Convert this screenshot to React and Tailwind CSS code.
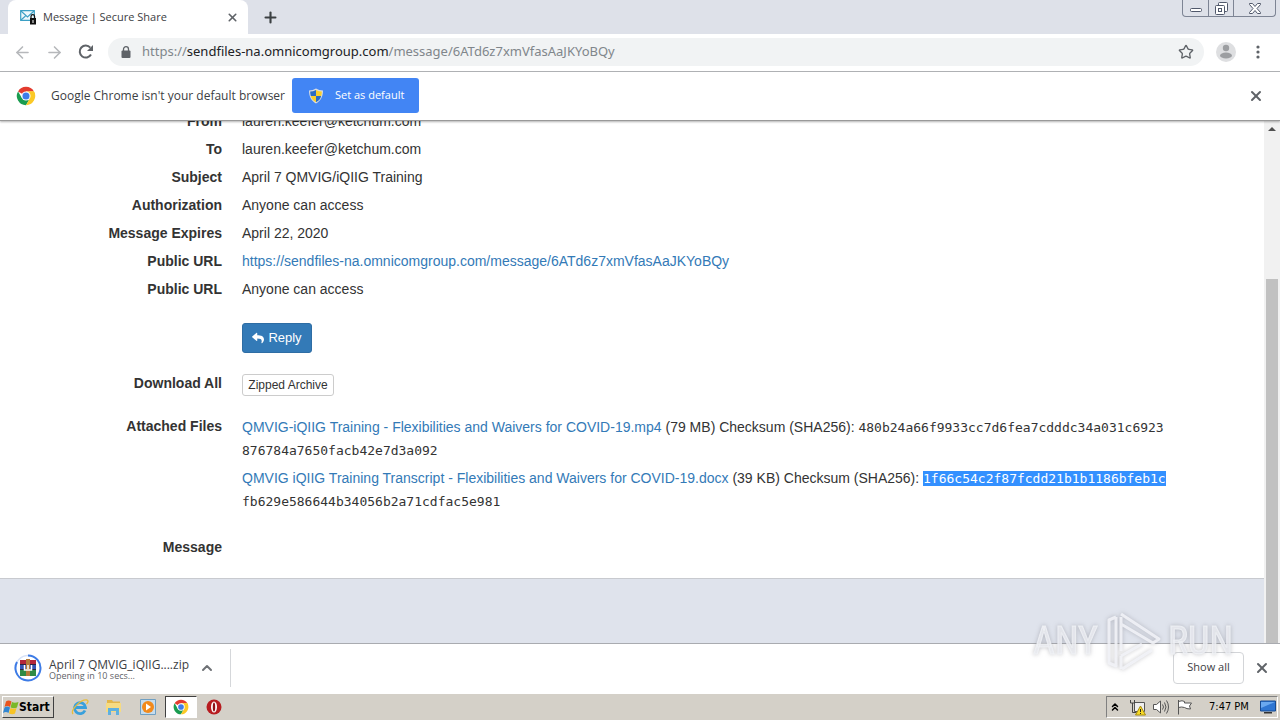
import { FaReply } from "react-icons/fa";
import { ArrowLeft, ArrowRight, ChevronUp, ChevronsUp, Plus, Star, X } from "lucide-react";

const messageUrl = "https://sendfiles-na.omnicomgroup.com/message/6ATd6z7xmVfasAaJKYoBQy";

const details = [
  { label: "From", value: "lauren.keefer@ketchum.com" },
  { label: "To", value: "lauren.keefer@ketchum.com" },
  { label: "Subject", value: "April 7 QMVIG/iQIIG Training" },
  { label: "Authorization", value: "Anyone can access" },
  { label: "Message Expires", value: "April 22, 2020" },
  { label: "Public URL", value: messageUrl, link: true },
  { label: "Public URL", value: "Anyone can access" },
];

const files = [
  {
    name: "QMVIG-iQIIG Training - Flexibilities and Waivers for COVID-19.mp4",
    size: "79 MB",
    hash: ["480b24a66f9933cc7d6fea7cdddc34a031c6923", "876784a7650facb42e7d3a092"],
  },
  {
    name: "QMVIG iQIIG Training Transcript - Flexibilities and Waivers for COVID-19.docx",
    size: "39 KB",
    hash: ["1f66c54c2f87fcdd21b1b1186bfeb1c", "fb629e586644b34056b2a71cdfac5e981"],
    selected: true,
  },
];

function ChromeLogo({ className }) {
  return (
    <svg className={className} viewBox="0 0 48 48" aria-hidden="true">
      <circle cx="24" cy="24" r="22" fill="#fff" />
      <path d="M24 24 4.900 13A22 22 0 0 1 43.100 13H24Z" fill="#e33b2e" />
      <path d="M4.900 13A22 22 0 0 0 24 46L33.500 29.500 24 24 14.500 29.500Z" fill="#1a9c50" />
      <path d="M43.100 13A22 22 0 0 1 24 46L33.500 29.500V13Z" fill="#fbc926" />
      <path d="M24 13H43.100A22 22 0 0 1 45.500 19H24Z" fill="#fbc926" />
      <circle cx="24" cy="24" r="11" fill="#fff" />
      <circle cx="24" cy="24" r="8.500" fill="#3e7de8" />
    </svg>
  );
}

function MailLockIcon() {
  return (
    <svg className="h-4 w-4 shrink-0" viewBox="0 0 16 16" fill="none" aria-hidden="true">
      <path d="M.7 1.700h13.600v9.600H.7Z" fill="#eef8fc" stroke="#3b9fc4" strokeWidth="1.200" />
      <path d="m1 2 6.500 6L14 2M1 11l4.500-4" stroke="#3b9fc4" strokeWidth="1.100" />
      <path d="M11 9V7.500a1.800 1.800 0 0 1 3.600 0V9" stroke="#111" strokeWidth="1.200" />
      <path d="M10 9h6v6.500h-6Z" fill="#111" />
      <path d="M12.500 11h1v3h-1Z" fill="#fff" />
    </svg>
  );
}

function ShieldIcon() {
  return (
    <svg className="h-4 w-4" viewBox="0 0 16 16" aria-hidden="true">
      <path d="M8 .5Q11 2.500 15 2.500C15 9 12.500 13 8 15.500 3.500 13 1 9 1 2.500Q5 2.500 8 .5Z" fill="#d9dde2" />
      <path d="M8 2v6H2.800C2.300 6.500 2.200 5 2.200 3.500Q5 3.500 8 2Z" fill="#2b6cc4" />
      <path d="M8 2v6h5.200c.5-1.500.6-3 .6-4.500Q11 3.500 8 2Z" fill="#f9cf2c" />
      <path d="M8 8v6.300C5.300 12.800 3.500 10.800 2.800 8Z" fill="#f9cf2c" />
      <path d="M8 8v6.300c2.700-1.500 4.500-3.500 5.200-6.300Z" fill="#2b6cc4" />
    </svg>
  );
}

function WindowButtons() {
  return (
    <div className="mr-1 flex h-[17px] rounded-b border border-t-0 border-[#7d8494]">
      <button className="flex w-[25px] items-end justify-center pb-1" type="button" aria-label="Minimize">
        <svg className="h-1 w-3" viewBox="0 0 12 4" aria-hidden="true">
          <rect x=".5" y=".5" width="11" height="3" rx="1" fill="#fff" stroke="#50586b" />
        </svg>
      </button>
      <button className="flex w-[26px] items-center justify-center border-x border-[#7d8494]" type="button" aria-label="Restore">
        <svg className="h-[13px] w-[13px]" viewBox="0 0 13 13" fill="#fff" stroke="#50586b" aria-hidden="true">
          <rect x="3.500" y=".5" width="9" height="9" rx="1" />
          <rect x=".5" y="3.500" width="9" height="9" rx="1" />
          <rect x="3.500" y="6.500" width="3" height="3" />
        </svg>
      </button>
      <button className="flex w-[41px] items-center justify-center" type="button" aria-label="Close window">
        <svg className="h-[11px] w-3" viewBox="0 0 12 11" aria-hidden="true">
          <path d="M.5.500h3L6 3.500 8.500.500h3v1L8 5.500l3.500 4v1h-3L6 7.500l-2.500 3h-3v-1l3.500-4-3.500-4Z" fill="#fff" stroke="#50586b" />
        </svg>
      </button>
    </div>
  );
}

function TabStrip() {
  return (
    <div className="flex h-[34px] shrink-0 items-start bg-[#dee1e9] pl-2">
      <div className="flex h-[34px] w-60 items-center rounded-t-lg bg-white pr-2 pl-3">
        <MailLockIcon />
        <span className="ml-[7px] flex-1 text-[11px] text-[#3c4043]">Message | Secure Share</span>
        <button className="grid h-4 w-4 place-items-center text-[#5f6368]" type="button" aria-label="Close tab">
          <X size={13} strokeWidth={3} />
        </button>
      </div>
      <button className="ml-3 grid h-[34px] w-5 place-items-center text-[#3c4043]" type="button" aria-label="New tab">
        <Plus size={17} strokeWidth={3} />
      </button>
      <div className="flex-1" />
      <WindowButtons />
    </div>
  );
}

function Toolbar() {
  return (
    <div className="flex h-[38px] shrink-0 items-center border-b border-[#b3b5b8] bg-white px-3 pb-px">
      <button className="grid w-5 place-items-center text-[#b6b8bb]" type="button" aria-label="Back">
        <ArrowLeft size={19} />
      </button>
      <button className="ml-3 grid w-5 place-items-center text-[#b6b8bb]" type="button" aria-label="Forward">
        <ArrowRight size={19} />
      </button>
      <button className="ml-3 grid w-5 place-items-center text-[#5f6368]" type="button" aria-label="Reload">
        <svg className="h-4 w-4" viewBox="0 0 16 16" aria-hidden="true">
          <path d="M13 10.500A6 6 0 1 1 12.300 3.700" fill="none" stroke="currentColor" strokeWidth="2" />
          <path d="M15 1v6H9Z" fill="currentColor" />
        </svg>
      </button>
      <div className="ml-3 flex h-7 flex-1 items-center rounded-full bg-[#f1f3f4] pr-[10px] pl-[13px]">
        <svg className="h-3 w-[10px]" viewBox="0 0 10 12" aria-hidden="true">
          <path d="M2.500 5V3.200a2.500 2.500 0 0 1 5 0V5" fill="none" stroke="#5f6368" strokeWidth="1.300" />
          <rect x=".5" y="4.500" width="9" height="7.500" rx="1" fill="#5f6368" />
        </svg>
        <div className="ml-[11px] flex-1 font-['Noto_Sans',sans-serif] text-[13px] text-[#80868b]">
          https://<span className="text-[#202124]">sendfiles-na.omnicomgroup.com</span>/message/6ATd6z7xmVfasAaJKYoBQy
        </div>
        <button className="text-[#5f6368]" type="button" aria-label="Bookmark this page">
          <Star size={16} strokeWidth={2} />
        </button>
      </div>
      <button className="ml-3" type="button" aria-label="Profile">
        <svg className="h-5 w-5" viewBox="0 0 20 20" aria-hidden="true">
          <circle cx="10" cy="10" r="10" fill="#dedfe1" />
          <circle cx="10" cy="6" r="3.200" fill="#9c9ea1" />
          <ellipse cx="10" cy="13.500" rx="6" ry="3" fill="#9c9ea1" />
        </svg>
      </button>
      <button className="ml-3 grid w-5 place-items-center" type="button" aria-label="Menu">
        <svg className="h-4 w-1" viewBox="0 0 4 16" fill="#5f6368" aria-hidden="true">
          <circle cx="2" cy="3" r="1.600" />
          <circle cx="2" cy="8" r="1.600" />
          <circle cx="2" cy="13" r="1.600" />
        </svg>
      </button>
    </div>
  );
}

function DefaultBrowserBar() {
  return (
    <div className="z-10 flex h-[49px] shrink-0 items-center border-b border-[#999] bg-white px-4 pb-px shadow-[0_1px_2px_rgba(0,0,0,0.3)]">
      <ChromeLogo className="h-5 w-5" />
      <span className="ml-[15px] text-xs text-[#3c4043]">Google Chrome isn't your default browser</span>
      <button className="ml-[7px] flex h-[35px] w-[127px] items-center rounded-[3px] bg-[#4285f4] pl-4 text-[11px] text-white" type="button">
        <ShieldIcon />
        <span className="ml-[11px]">Set as default</span>
      </button>
      <div className="flex-1" />
      <button className="text-[#5f6368]" type="button" aria-label="Dismiss">
        <X size={16} strokeWidth={3} />
      </button>
    </div>
  );
}

function MessagePage() {
  return (
    <main className="flex min-w-0 flex-1 flex-col overflow-hidden bg-[#dfe3ec] font-['Liberation_Sans',Arial,sans-serif] text-sm text-[#333]">
      <div className="shrink-0 border-b border-[#c8cacf] bg-white pb-[19px]">
        <dl className="-mt-[14px] grid grid-cols-[222px_1fr] gap-x-5 pr-[90px]">
          {details.map((item, index) => (
            <div className="col-span-2 grid h-7 grid-cols-subgrid items-center" key={index}>
              <dt className="text-right font-bold">{item.label}</dt>
              <dd>
                {item.link ? <a className="text-[#337ab7]" href={item.value}>{item.value}</a> : item.value}
              </dd>
            </div>
          ))}
          <dd className="col-start-2 mt-5">
            <button className="flex h-[30px] w-[70px] items-center justify-center gap-1 rounded-[3px] border border-[#2e6da4] bg-[#337ab7] text-[13px] text-white" type="button">
              <FaReply size={12} /> Reply
            </button>
          </dd>
          <dt className="mt-[19px] text-right leading-[23px] font-bold">Download All</dt>
          <dd className="mt-[21px]">
            <button className="block h-[22px] w-[92px] rounded-[3px] border border-[#ccc] bg-white text-xs" type="button">
              Zipped Archive
            </button>
          </dd>
          <dt className="mt-[19px] text-right leading-[23px] font-bold">Attached Files</dt>
          <dd className="mt-5">
            <ul className="grid gap-[5px] leading-[23px] whitespace-nowrap">
              {files.map((file) => (
                <li key={file.name}>
                  <a className="text-[#337ab7]" href="#">{file.name}</a> ({file.size}) Checksum (SHA256):{" "}
                  <code className={file.selected ? "bg-[#3390ff] font-['DejaVu_Sans_Mono',monospace] text-[13px] leading-none text-white" : "font-['DejaVu_Sans_Mono',monospace] text-[13px] leading-none"}>
                    {file.hash[0]}
                  </code>
                  <br />
                  <code className="font-['DejaVu_Sans_Mono',monospace] text-[13px] leading-none">{file.hash[1]}</code>
                </li>
              ))}
            </ul>
          </dd>
          <dt className="mt-[23px] text-right leading-[23px] font-bold">Message</dt>
          <dd />
        </dl>
      </div>
    </main>
  );
}

function Scrollbar() {
  return (
    <div className="flex w-4 shrink-0 flex-col items-center bg-[#f1f1f1]">
      <svg className="mt-1 h-2 w-2" viewBox="0 0 8 8" aria-hidden="true">
        <path d="M0 6 4 2l4 4Z" fill="#505050" />
      </svg>
      <div className="mt-[146px] w-3 flex-1 bg-[#c1c1c1]" />
    </div>
  );
}

function ZipIcon() {
  return (
    <svg className="h-7 w-7" viewBox="0 0 28 28" aria-hidden="true">
      <circle cx="14" cy="14" r="12.500" fill="none" stroke="#d6e2f8" strokeWidth="1.500" />
      <path d="M14 1.500A12.500 12.500 0 1 1 3 8" fill="none" stroke="#3d7be6" strokeWidth="2" />
      <rect x="6" y="6" width="16" height="5" fill="#b3263c" />
      <rect x="6" y="11" width="16" height="5" fill="#3554b5" />
      <rect x="6" y="16" width="16" height="6" fill="#2f8a45" />
      <path d="M6 10.500h16M6 15.500h16" stroke="#2b2340" />
      <rect x="12" y="5" width="4" height="17" fill="#b5793a" />
      <path d="M10.500 11v5h7v-5M14 11v4" fill="none" stroke="#fff" strokeWidth="1.500" />
    </svg>
  );
}

function DownloadBar() {
  return (
    <div className="flex h-[50px] shrink-0 items-center border-t border-[#a9abb0] bg-white pr-[10px] pb-[2px] pl-[14px]">
      <ZipIcon />
      <div className="ml-[7px] w-[138px] pt-1 whitespace-nowrap">
        <div className="text-xs leading-3 text-[#3c4043]">April 7 QMVIG_iQIIG....zip</div>
        <div className="text-[9px] leading-[10px] text-[#5f6368]">Opening in 10 secs...</div>
      </div>
      <button className="ml-3 text-[#6f7276]" type="button" aria-label="Download options">
        <ChevronUp size={16} strokeWidth={3} />
      </button>
      <div className="ml-[15px] h-[38px] w-px bg-[#d5d7da]" />
      <div className="flex-1" />
      <button className="h-8 w-[71px] rounded border border-[#d3d5d8] text-[11px] text-[#3c4043]" type="button">
        Show all
      </button>
      <button className="ml-[10px] text-[#5f6368]" type="button" aria-label="Close downloads">
        <X size={16} strokeWidth={3} />
      </button>
    </div>
  );
}

function Watermark() {
  return (
    <div className="pointer-events-none absolute right-[47px] bottom-[47px] z-20 flex items-center gap-[6px] font-['Roboto_Condensed','Liberation_Sans_Narrow','Liberation_Sans',sans-serif] text-[38px] leading-[64px] text-[#eceef3]/80 drop-shadow-[0_0_2px_rgba(120,120,130,0.5)] [-webkit-text-stroke:1px_rgba(240,242,246,0.8)]">
      <span>ANY</span>
      <svg className="h-16 w-[58px]" viewBox="0 0 58 64" fill="none" stroke="#f3f5f9" strokeOpacity=".85" strokeWidth="3" strokeLinejoin="round" aria-hidden="true">
        <path d="M12 8 5 11v43l7 3V8M17 8v34M17 5l38 25-6 4L17 15M17 47l21-12M18 60l30-19M17 47v13" />
      </svg>
      <span>RUN</span>
    </div>
  );
}

function Taskbar() {
  return (
    <footer className="flex h-[27px] shrink-0 items-center border-t border-white bg-[#d4d0c8] pl-[2px] font-['DejaVu_Sans_Condensed','DejaVu_Sans',sans-serif] text-[11px] text-black">
      <button className="flex h-[22px] w-[52px] items-center border border-t-white border-r-[#404040] border-b-[#404040] border-l-white text-xs font-bold" type="button">
        <svg className="h-4 w-4 shrink-0" viewBox="0 0 16 16" aria-hidden="true">
          <path d="M3 2.500q2.500-2 5.500 0L7 8q-2.500-2-5.500 0Z" fill="#e9541d" />
          <path d="M9 3q2.500 1.500 6.500 0L14 8.500q-3 1.500-6.500 0Z" fill="#7ab829" />
          <path d="M1.500 8.500q2.500-2 5.500 0L5.500 14Q3 12 0 14Z" fill="#3186d1" />
          <path d="M7.500 9q3 1.500 6 0L12 14.500q-2.500 1.500-6 0Z" fill="#f7c325" />
        </svg>
        Start
      </button>
      <button className="ml-[17px]" type="button" aria-label="Internet Explorer">
        <svg className="h-[18px] w-[18px]" viewBox="0 0 18 18" fill="none" aria-hidden="true">
          <path d="M14 12.500A5.500 5.500 0 1 1 14.500 9.500H5" stroke="#39a0dc" strokeWidth="2.800" />
          <path d="M2 16C-1 12 10 1 16 2c2 1 .5 3-.5 4" stroke="#e8bd3b" strokeWidth="1.300" />
        </svg>
      </button>
      <button className="ml-4" type="button" aria-label="Explorer">
        <svg className="h-[18px] w-[18px]" viewBox="0 0 18 18" aria-hidden="true">
          <path d="M2 2h5l1 1.500h7V14H2Z" fill="#e3b64a" />
          <path d="M1 5h15v9H1Z" fill="#f6db82" />
          <path d="M3 17v-7h11v7h-3v-4H6v4Z" fill="#5fb0df" />
        </svg>
      </button>
      <button className="ml-4" type="button" aria-label="Media Player">
        <svg className="h-[18px] w-[18px]" viewBox="0 0 18 18" aria-hidden="true">
          <path d="M1.500 1.500h15v15h-15Z" fill="#c6dced" stroke="#6f9fc2" />
          <circle cx="9" cy="9" r="6" fill="#f28a1c" />
          <path d="m7 5.500 5 3.500-5 3.500Z" fill="#fff" />
        </svg>
      </button>
      <button className="ml-2 grid h-[22px] w-8 place-items-center border border-t-[#404040] border-r-white border-b-white border-l-[#404040] bg-white" type="button" aria-label="Chrome">
        <ChromeLogo className="h-4 w-4" />
      </button>
      <button className="ml-[9px]" type="button" aria-label="Opera">
        <svg className="h-4 w-4" viewBox="0 0 16 16" aria-hidden="true">
          <circle cx="8" cy="8" r="7.500" fill="#b71c20" />
          <ellipse cx="8" cy="8" rx="3" ry="5.500" fill="#fff" />
          <ellipse cx="8" cy="8" rx="1.200" ry="4.500" fill="#8f1015" />
        </svg>
      </button>
      <div className="flex-1" />
      <div className="mr-[2px] flex h-[22px] w-[172px] items-center border border-t-[#808080] border-r-white border-b-white border-l-[#808080] pl-[2px]">
        <ChevronsUp size={12} strokeWidth={3} />
        <svg className="ml-2 h-[17px] w-[17px]" viewBox="0 0 17 17" fill="none" aria-hidden="true">
          <path d="M5.500 3.500h10v9h-10Z" fill="#eee" stroke="#555" />
          <path d="M1.500 1v3h4V1M3.500 4v9.500h4" stroke="#444" />
          <path d="m11.500 7 5 9h-10Z" fill="#f7da27" stroke="#a58a10" />
          <path d="M11.500 10v3M11.500 14v1" stroke="#222" />
        </svg>
        <svg className="ml-[7px] h-4 w-4" viewBox="0 0 16 16" fill="none" stroke="#555" aria-hidden="true">
          <path d="M.5 5.500h3L7.500 2v12l-4-3.500h-3Z" fill="#fff" />
          <path d="M9.500 5.500q2 2.500 0 5M11.500 3.500q3 4.500 0 9M13.500 1.500q4 6.500 0 13" />
        </svg>
        <svg className="ml-2 h-4 w-4" viewBox="0 0 16 16" fill="#fff" stroke="#555" aria-hidden="true">
          <path d="M1.500 1v14.500M1.500 2.500q4-1.500 6 0v1.500h7l-2 3 1 3q-4 0-6-1.500-3-1-6 0Z" />
        </svg>
        <span className="ml-4 flex-1 whitespace-nowrap">7:47 PM</span>
        <svg className="mr-px h-4 w-4" viewBox="0 0 16 16" aria-hidden="true">
          <path d="M.5 2h15v10H.5Z" fill="#2f76d2" stroke="#174a91" />
          <path d="M1 3h14L1 9Z" fill="#6aa8ef" />
          <path d="M4 13h8v1.500H4Z" fill="#333" />
        </svg>
      </div>
    </footer>
  );
}

function App() {
  return (
    <div className="relative flex h-screen flex-col overflow-hidden bg-white font-['Open_Sans','Noto_Sans',sans-serif]">
      <TabStrip />
      <Toolbar />
      <DefaultBrowserBar />
      <div className="flex min-h-0 flex-1">
        <MessagePage />
        <Scrollbar />
      </div>
      <DownloadBar />
      <Taskbar />
      <Watermark />
    </div>
  );
}

export default App;
